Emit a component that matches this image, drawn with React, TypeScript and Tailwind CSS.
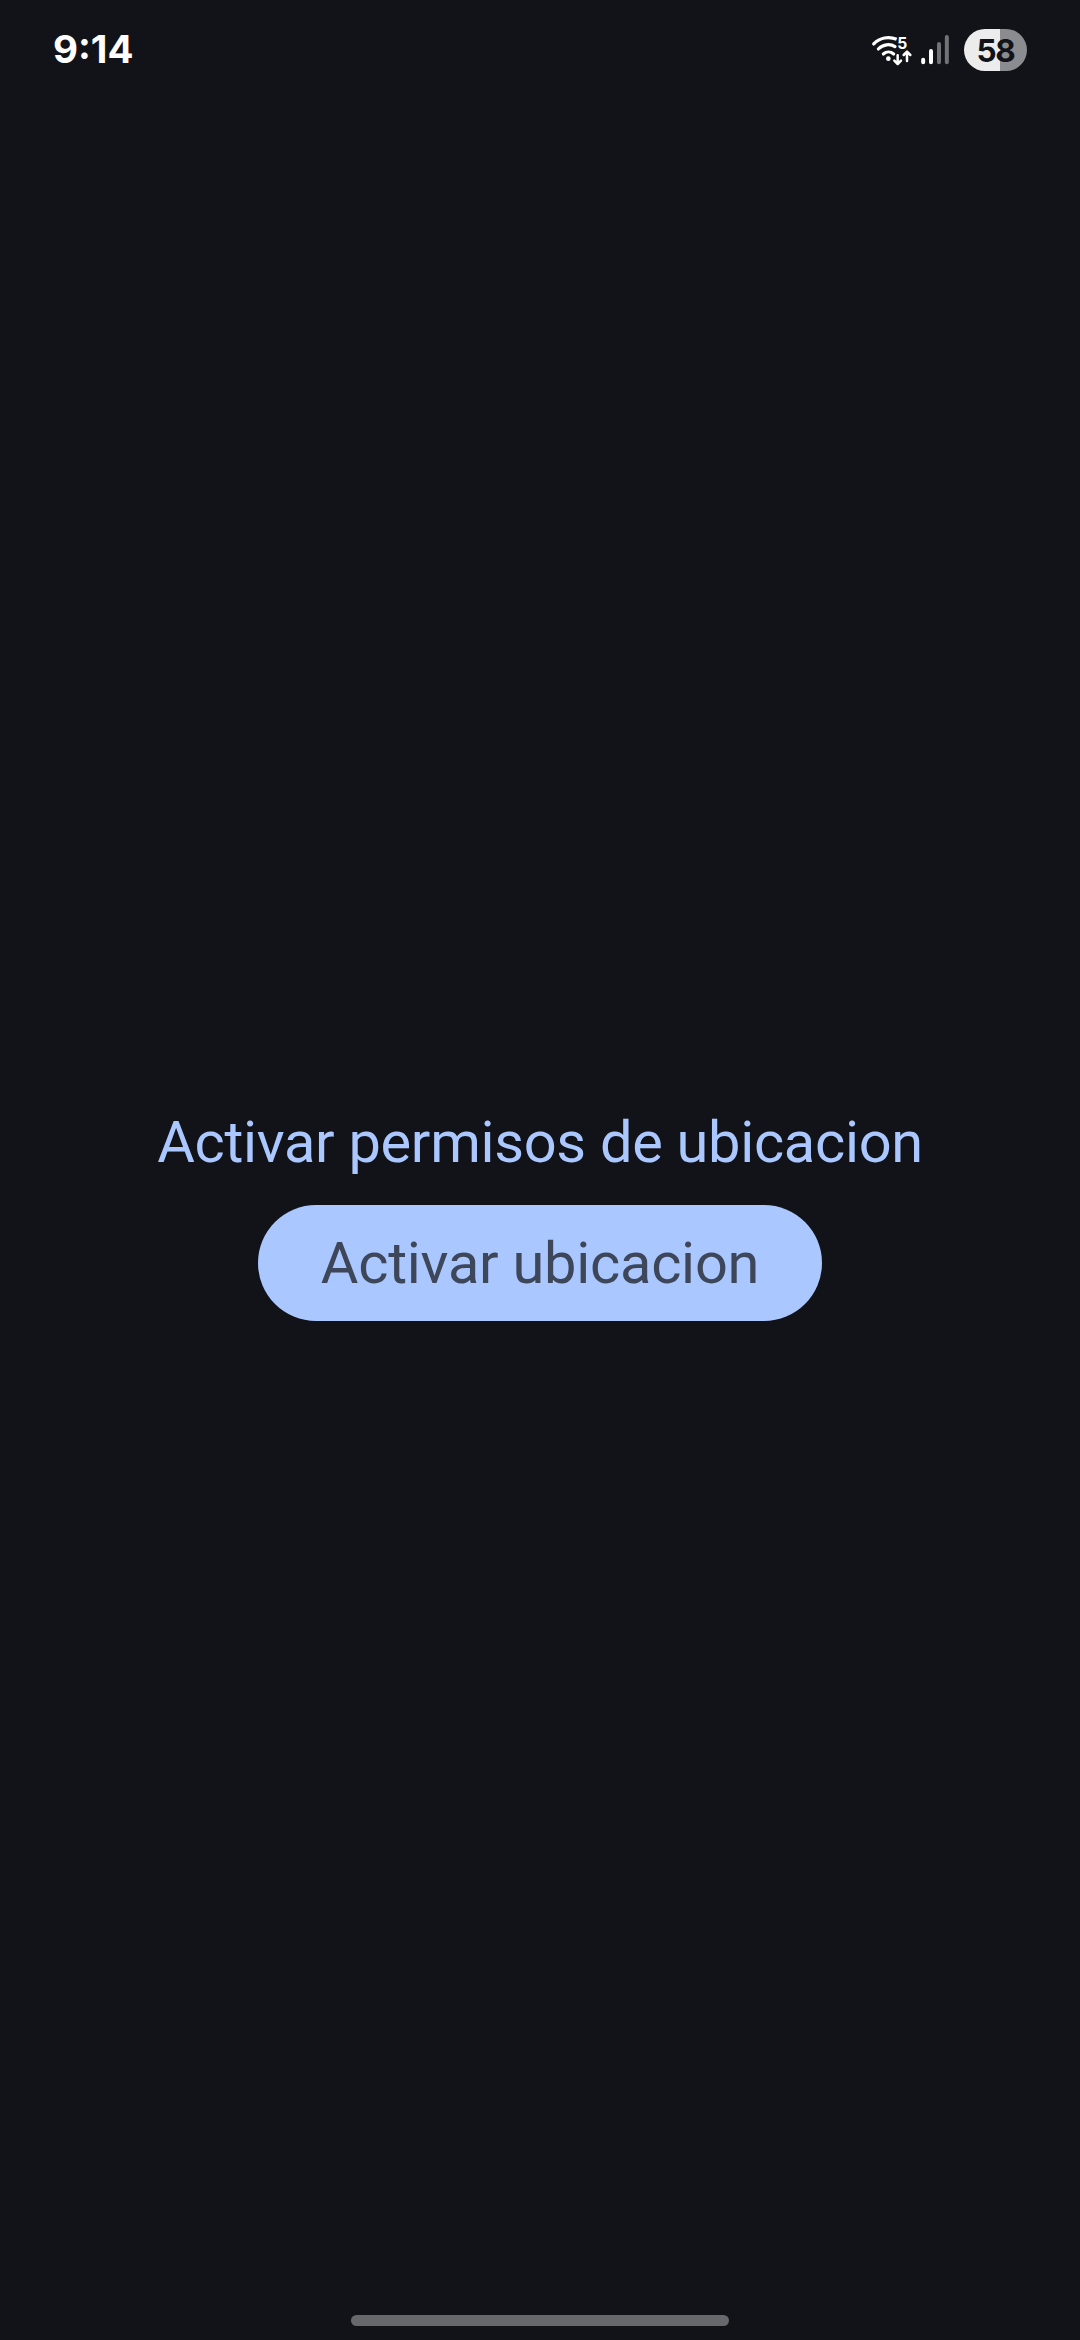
function ConnectivityIcons() {
  return (
    <svg className="h-[50px] w-[90px]" viewBox="0 0 270 150" fill="none" aria-hidden="true">
      <g stroke="#fff" strokeWidth="9.5" strokeLinecap="round">
        <path d="M26 57C44 38 71 33 95 43" strokeLinecap="butt" />
        <path d="M26 57L27 56" />
        <path d="M40 72C54 58 75 55 90 65" />
        <path d="M55 87C64 79 77 79 86 87" />
      </g>
      <circle cx="70" cy="101" r="7" fill="#fff" />
      <text x="97" y="72" fill="#fff" fontFamily="Inter, sans-serif" fontWeight="700" fontSize="48" textLength="30" lengthAdjust="spacingAndGlyphs">5</text>
      <g stroke="#fff" strokeWidth="7.5" strokeLinecap="round" strokeLinejoin="round">
        <path d="M98 91V116M88 107L98 117L108 107" />
        <path d="M126 108V81M116 90L126 80L136 90" />
      </g>
      <g strokeWidth="12" strokeLinecap="round">
        <path d="M174.500 104V112M198 78V112" stroke="#fff" />
        <path d="M222 57V112M245.500 36V112" stroke="#717275" />
      </g>
    </svg>
  );
}

function StatusBar() {
  return (
    <header className="flex h-[100px] items-center justify-between pl-[53px] pr-[53px] font-['Inter',sans-serif] font-bold">
      <span className="pb-[1px] text-[38.500px] leading-none text-white [font-feature-settings:'case']">9:14</span>
      <div className="flex items-center gap-[9px]">
        <ConnectivityIcons />
        <div className="flex h-[42px] w-[63px] items-center justify-center rounded-full bg-linear-to-r from-[#ececed] from-[57%] to-[#8b8c8f] to-[57%] pt-[2px] text-[31.500px] leading-none tracking-[-1.200px] text-[#121318]">
          58
        </div>
      </div>
    </header>
  );
}

export default function App() {
  return (
    <div className="flex h-[2340px] w-[1080px] flex-col bg-[#121318] font-['Roboto',sans-serif]">
      <StatusBar />
      <main className="flex flex-1 flex-col items-center pt-[1008px]">
        <p className="text-[57.75px] leading-[68px] tracking-[-0.3px] text-[#aac7ff]">Activar permisos de ubicacion</p>
        <button className="mt-[29px] flex h-[116px] w-[564px] items-center justify-center rounded-full bg-[#aac7ff] text-[57.75px] leading-[68px] tracking-[-0.25px] text-[#3e4759]">
          Activar ubicacion
        </button>
      </main>
      <footer className="flex justify-center pb-[14px]">
        <div className="h-[11px] w-[378px] rounded-full bg-[#67686b]" />
      </footer>
    </div>
  );
}
